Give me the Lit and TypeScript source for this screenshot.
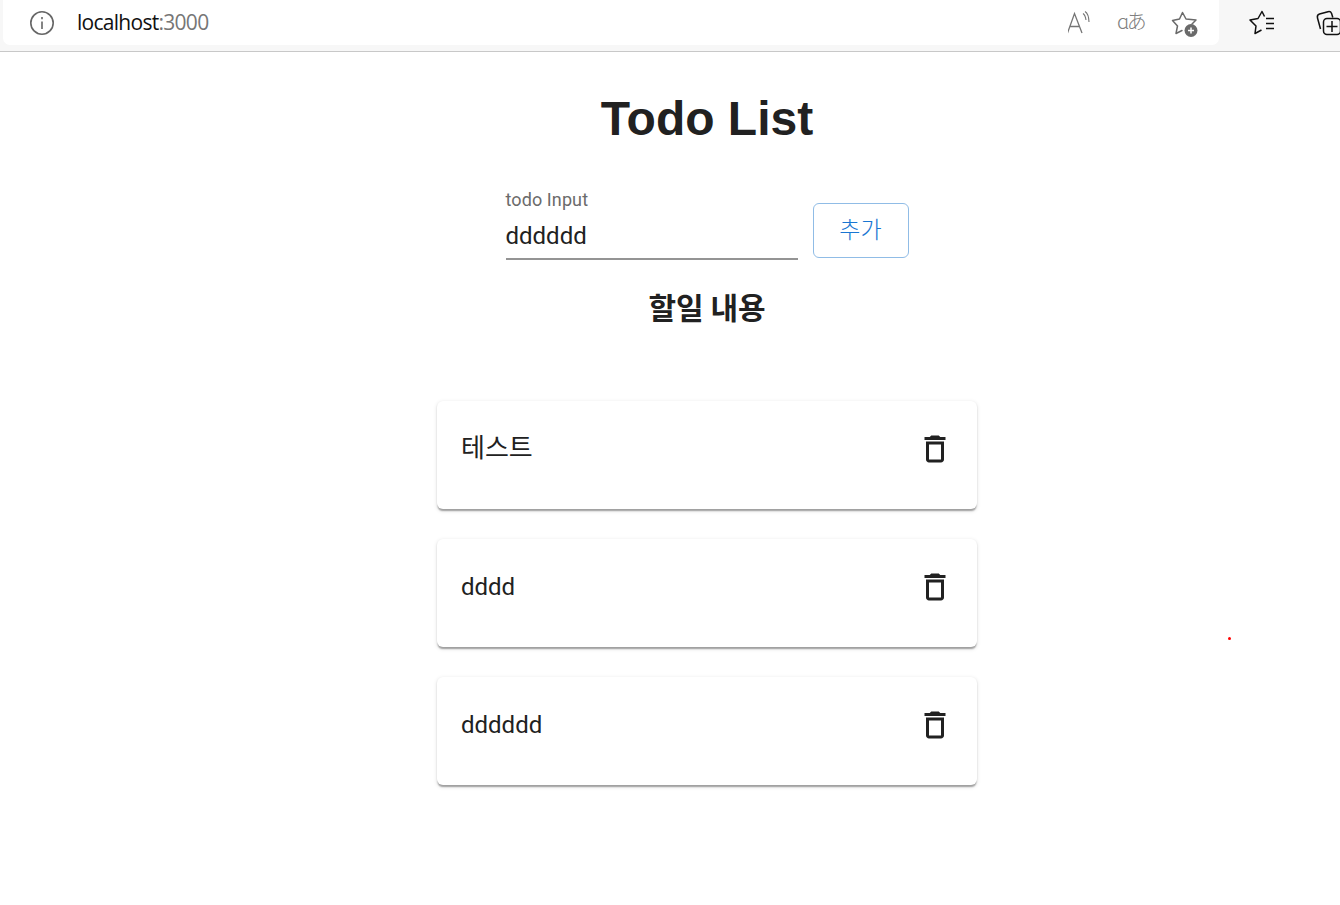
import {css, html, LitElement} from "lit";
import {customElement, state} from "lit/decorators.js";
import {classMap} from "lit/directives/class-map.js";

@customElement("app-root")
export class AppRoot extends LitElement {
    @state() todos = ["테스트", "dddd", "dddddd"];
    @state() input = "dddddd";

    static styles = css`
      :host {
        display: block;
        position: relative;
        width: 1340px;
        height: 905px;
        overflow: hidden;
        background: #fff;
        color: #212121;
        font-family: Roboto, "Noto Sans CJK KR", sans-serif;
      }

      .chrome {
        display: flex;
        align-items: flex-start;
        height: 51px;
        background: #f7f7f7;
        border-bottom: 1px solid #c8c8c8;
        overflow: hidden;
      }

      .address {
        display: flex;
        align-items: center;
        width: 1216px;
        height: 45px;
        margin-left: 3px;
        background: #fff;
        border-radius: 0 0 7px 7px;
        flex: none;
      }

      .info {
        margin-left: 26px;
        flex: none;
      }

      .url {
        margin-left: 22px;
        padding-bottom: 2px;
        font: 21px "Open Sans", sans-serif;
        letter-spacing: -0.72px;
        color: #111;
        flex: 1;
      }

      .url span {
        color: #767676;
      }

      .address-icons {
        display: flex;
        align-items: center;
        gap: 25px;
        margin-right: 20px;
      }

      .translate {
        padding-bottom: 4px;
        font: 300 20px "Noto Sans CJK JP", sans-serif;
        letter-spacing: -2.5px;
        color: #808080;
        width: 29px;
      }

      .tools {
        display: flex;
        align-items: center;
        height: 45px;
        gap: 37px;
        margin-left: 30px;
        flex: none;
      }

      main {
        display: flex;
        flex-direction: column;
        align-items: center;
        padding-left: 74px;
      }

      h1 {
        margin: 39px 0 0;
        font: bold 48px/55px "Liberation Sans", sans-serif;
      }

      form {
        display: flex;
        align-items: flex-start;
        gap: 15px;
        margin-top: 42px;
      }

      .field {
        display: flex;
        flex-direction: column;
        width: 292px;
        border-bottom: 2px solid #949494;
      }

      label {
        font-size: 18px;
        line-height: 24px;
        letter-spacing: 0.1px;
        color: #6b6b6b;
      }

      input {
        box-sizing: border-box;
        height: 46px;
        padding: 1px 0 0;
        border: none;
        outline: none;
        background: none;
        font: 24px Roboto, sans-serif;
        color: #212121;
      }

      button.add {
        width: 96px;
        height: 55px;
        margin-top: 15px;
        padding: 0 0 6px;
        border: 1px solid #90bce6;
        border-radius: 6px;
        background: #fff;
        font: 300 23px "Noto Sans CJK KR", sans-serif;
        color: #1976d2;
      }

      h3 {
        margin: 26px 0 0;
        font: bold 30px/40px "Noto Sans CJK KR", sans-serif;
      }

      .list {
        display: flex;
        flex-direction: column;
        gap: 30px;
        width: 540px;
        margin-top: 75px;
      }

      .card {
        display: flex;
        justify-content: space-between;
        align-items: flex-start;
        height: 108px;
        box-sizing: border-box;
        padding: 24px 24px 0;
        background: #fff;
        border-radius: 6px;
        box-shadow: 0 3px 1.5px -1.5px rgba(0, 0, 0, .2), 0 1.5px 1.5px rgba(0, 0, 0, .14), 0 1.5px 4.5px rgba(0, 0, 0, .12);
      }

      .card p {
        margin: 0;
        font: 24px/48px Roboto, sans-serif;
      }

      .card p.ko {
        font: 26px/42px "Noto Sans CJK KR", sans-serif;
      }

      .delete {
        display: flex;
        padding: 6px 0;
        border: none;
        background: none;
        color: #212121;
        cursor: pointer;
      }

      .dot {
        position: absolute;
        left: 1228px;
        top: 637px;
        width: 3px;
        height: 3px;
        border-radius: 50%;
        background: #f00;
      }
    `

    addTodo(e: Event) {
        e.preventDefault();
        if (this.input) this.todos = [...this.todos, this.input];
    }

    removeTodo(index: number) {
        this.todos = this.todos.filter((_, i) => i !== index);
    }

    renderChrome() {
        return html`
            <div class="chrome">
                <div class="address">
                    <svg class="info" width="26" height="26" viewBox="0 0 26 26" fill="none" stroke="#666" stroke-width="1.6">
                        <circle cx="13" cy="13" r="11.2"/>
                        <path d="M13 11.5v7.5M13 7v2.2"/>
                    </svg>
                    <div class="url">localhost<span>:3000</span></div>
                    <div class="address-icons">
                        <svg width="24" height="24" viewBox="1 0 24 24" fill="none" stroke="#757575" stroke-width="1.3">
                            <path d="M.5 22 7.500 2.500 15 22M3 15.500h10"/>
                            <path d="M16 2.500c1.500 1 2.500 3 3 6.500M18 .5c2.500 1.500 3.800 4.500 4 10.500" stroke-width="1.100"/>
                        </svg>
                        <div class="translate">ɑあ</div>
                        <svg width="28" height="28" viewBox="0 0 28 28" fill="none">
                            <path d="M5 24.500 11 21.500M5 24.500 6.500 17 1.500 11.500 8.500 10 11.500 3.500 15 10 25 11 21 15" stroke="#6a6a6a" stroke-width="1.500" stroke-linejoin="round" stroke-linecap="round"/>
                            <circle cx="20" cy="21.500" r="6.500" fill="#6a6a6a"/>
                            <path d="M20 18.500v6M17 21.500h6" stroke="#fff" stroke-width="1.500"/>
                        </svg>
                    </div>
                </div>
                <div class="tools">
                    <svg width="28" height="26" viewBox="0 0 28 26" fill="none" stroke="#111" stroke-width="1.500" stroke-linejoin="round">
                        <path d="M15.500 6.500 13 1.500 9 8.500 1 10 7 16 6 23.500 12.500 20"/>
                        <path d="M17 8.500h8M17 13.500h8M17 18.500h8"/>
                    </svg>
                    <svg width="28" height="28" viewBox="0 0 28 28" fill="none" stroke="#111" stroke-width="1.500">
                        <path d="M6.500 20 3.500 9C3 7 4 5.500 5.500 5L14 2.700c1.500-.4 3 .3 3.600 1.800l1.200 4"/>
                        <rect x="9.500" y="9.500" width="17" height="16" rx="3.500"/>
                        <path d="M18 12v11M12.500 17.500h11"/>
                    </svg>
                </div>
            </div>
        `
    }

    render() {
        return html`
            ${this.renderChrome()}
            <main>
                <h1>Todo List</h1>
                <form @submit="${this.addTodo}">
                    <div class="field">
                        <label for="todo">todo Input</label>
                        <input id="todo" .value="${this.input}" @input="${(e: Event) => this.input = (e.target as HTMLInputElement).value}"/>
                    </div>
                    <button class="add" type="submit">추가</button>
                </form>
                <h3>할일 내용</h3>
                <div class="list">
                    ${this.todos.map((todo, i) => html`
                        <div class="card">
                            <p class="${classMap({ko: /[^\x00-\x7f]/.test(todo)})}">${todo}</p>
                            <button class="delete" @click="${() => this.removeTodo(i)}">
                                <svg width="36" height="36" viewBox="0 0 24 24" fill="currentColor">
                                    <path d="M6 19c0 1.100.9 2 2 2h8c1.100 0 2-.9 2-2V7H6v12zM8 9h8v10H8V9zm7.500-5l-1-1h-5l-1 1H5v2h14V4z"/>
                                </svg>
                            </button>
                        </div>
                    `)}
                </div>
            </main>
            <div class="dot"></div>
        `
    }
}
